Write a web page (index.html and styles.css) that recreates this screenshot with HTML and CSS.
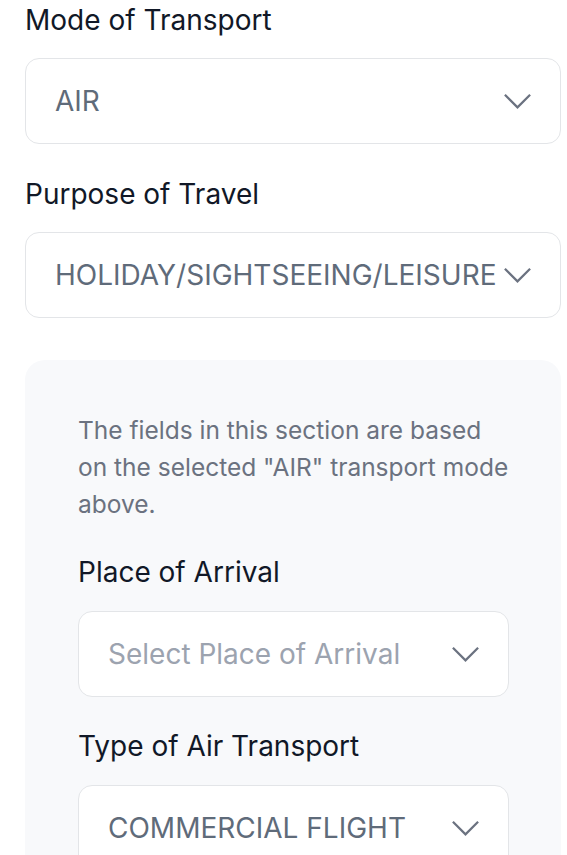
FILE: index.html
```html
<!DOCTYPE html>
<html lang="en">
<head>
<meta charset="utf-8">
<link rel="stylesheet" href="styles.css">
</head>
<body>
<div class="form">
  <div class="field">
    <label class="label">Mode of Transport</label>
    <div class="select">
      <span class="value">AIR</span>
      <svg class="chev" viewBox="0 0 24 24"><path d="M0.8 6 12 17.2 23.2 6"/></svg>
    </div>
  </div>
  <div class="field">
    <label class="label">Purpose of Travel</label>
    <div class="select">
      <span class="value">HOLIDAY/SIGHTSEEING/LEISURE</span>
      <svg class="chev" viewBox="0 0 24 24"><path d="M0.8 6 12 17.2 23.2 6"/></svg>
    </div>
  </div>
  <div class="section">
    <p class="note">The fields in this section are based on the selected "AIR" transport mode above.</p>
    <div class="field">
      <label class="label">Place of Arrival</label>
      <div class="select">
        <span class="value placeholder">Select Place of Arrival</span>
        <svg class="chev" viewBox="0 0 24 24"><path d="M0.8 6 12 17.2 23.2 6"/></svg>
      </div>
    </div>
    <div class="field">
      <label class="label">Type of Air Transport</label>
      <div class="select">
        <span class="value">COMMERCIAL FLIGHT</span>
        <svg class="chev" viewBox="0 0 24 24"><path d="M0.8 6 12 17.2 23.2 6"/></svg>
      </div>
    </div>
  </div>
</div>
</body>
</html>
```
FILE: styles.css
```css
* { box-sizing: border-box; }
html, body { margin: 0; padding: 0; background: #ffffff; }
body { font-family: Inter, "Noto Sans", sans-serif; }
.form {
  padding: 0 6px 0 25px;
  display: flex;
  flex-direction: column;
  gap: 30px;
}
.field {
  display: flex;
  flex-direction: column;
  gap: 17px;
}
.label {
  font-size: 28px;
  line-height: 41px;
  color: #111827;
  font-weight: 400;
}
.select {
  height: 86px;
  border: 1px solid #e3e5e8;
  border-radius: 14px;
  background: #ffffff;
  display: flex;
  align-items: center;
  justify-content: space-between;
  padding: 0 29px 0 29px;
  gap: 8px;
}
.value {
  font-size: 28px;
  color: #5f6b7a;
  white-space: nowrap;
  overflow: hidden;
}
.value.placeholder { color: #9ca3af; }
.chev {
  width: 27px;
  height: 27px;
  flex: none;
  fill: none;
  stroke: #6b7280;
  stroke-width: 2;
}
.section {
  margin-top: 12px;
  background: #f8f9fb;
  border-radius: 20px;
  padding: 52px 52px 40px 53px;
  display: flex;
  flex-direction: column;
  gap: 29px;
  min-height: 520px;
}
.section .field { gap: 18px; }
.note {
  margin: 0;
  font-size: 24.5px;
  line-height: 37px;
  color: #6b7280;
}
```
